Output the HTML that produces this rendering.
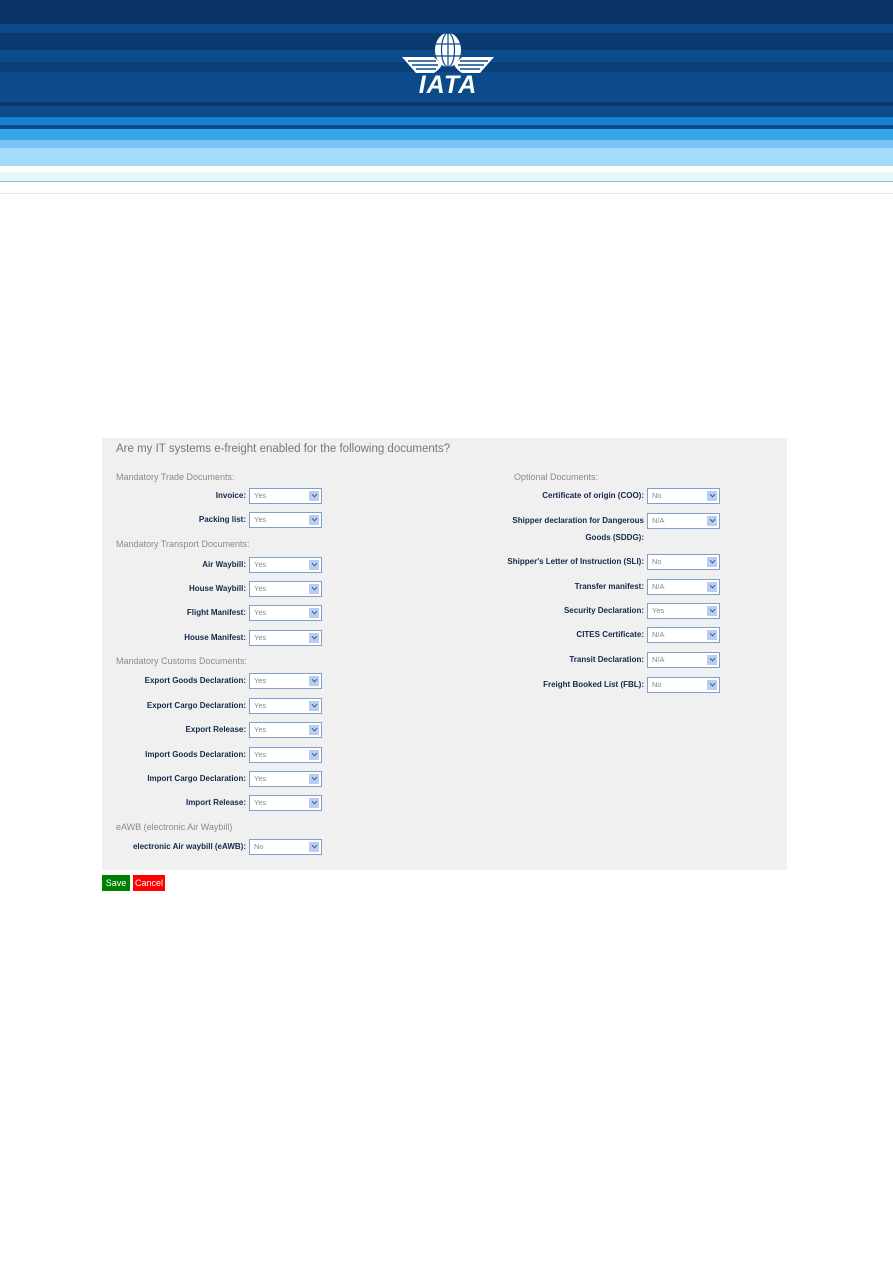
<!DOCTYPE html>
<html><head><meta charset="utf-8"><style>
body{margin:0;width:893px;height:1263px;background:#fff;position:relative;font-family:"Liberation Sans",Arial,sans-serif;overflow:hidden}
.s{position:absolute;left:0;width:893px}
.p{position:absolute;left:102px;top:438px;width:685px;height:432px;background:#f0f0f0}
.t{position:absolute;color:#8a8a8a;font-size:9px;white-space:nowrap}
.l{position:absolute;font-size:8px;font-weight:bold;color:#14284a;text-align:right;white-space:nowrap}
.sel{position:absolute;width:71px;height:14px;background:#fff;border:1px solid #7fa0c8;font-size:7.5px;color:#888;line-height:14px;text-indent:4px}
.sel::after{content:"";position:absolute;right:2px;top:2px;width:10px;height:10px;background:#b8cdf0}
.sel i{position:absolute;right:4px;width:4px;height:4px;border-right:1.5px solid #2a4a80;border-bottom:1.5px solid #2a4a80;transform:rotate(45deg) scale(.8);z-index:1;top:3px}
.b{position:absolute;top:875px;height:16px;color:#fff;font-size:9px;line-height:16px;text-align:center}
</style></head><body>
<div class="s" style="top:0;height:24px;background:#0a3264"></div>
<div class="s" style="top:24px;height:9px;background:#0d4a8a"></div>
<div class="s" style="top:33px;height:17px;background:#0a3a70"></div>
<div class="s" style="top:50px;height:12px;background:#0d4a8a"></div>
<div class="s" style="top:62px;height:10px;background:#0b3f78"></div>
<div class="s" style="top:72px;height:30px;background:#0d4a8a"></div>
<div class="s" style="top:102px;height:4px;background:#0a3a70"></div>
<div class="s" style="top:106px;height:11px;background:#0d4a8a"></div>
<div class="s" style="top:117px;height:8px;background:#1a80d0"></div>
<div class="s" style="top:125px;height:4px;background:#0d4a8a"></div>
<div class="s" style="top:129px;height:11px;background:#38a6ea"></div>
<div class="s" style="top:140px;height:8px;background:#78c4f4"></div>
<div class="s" style="top:148px;height:18px;background:#a2dcfa"></div>
<div class="s" style="top:166px;height:6px;background:#fff"></div>
<div class="s" style="top:172px;height:10px;background:#e2f8fa"></div>
<div class="s" style="top:181px;height:1px;background:#8ac8d0"></div>
<div class="s" style="top:193px;height:1px;background:#d8f0f6"></div>
<svg style="position:absolute;left:400px;top:32px" width="96" height="64" viewBox="0 0 96 64">
<ellipse cx="48" cy="18" rx="13" ry="17" fill="#fff"/>
<g stroke="#0d4a8a" stroke-width="1.2" fill="none"><line x1="48" y1="1" x2="48" y2="35"/><ellipse cx="48" cy="18" rx="6.5" ry="17"/><line x1="35" y1="12" x2="61" y2="12"/><line x1="35" y1="24" x2="61" y2="24"/></g>
<path d="M34 25 L2 25 L9 33 L16 41 L34 41 Q39 38 42 33 Z" fill="#fff"/>
<path d="M62 25 L94 25 L87 33 L80 41 L62 41 Q57 38 54 33 Z" fill="#fff"/>
<g stroke="#0d4a8a" stroke-width="1.5"><line x1="8" y1="29" x2="36" y2="29"/><line x1="12" y1="33" x2="38" y2="33"/><line x1="16" y1="37" x2="36" y2="37"/><line x1="60" y1="29" x2="88" y2="29"/><line x1="58" y1="33" x2="84" y2="33"/><line x1="60" y1="37" x2="80" y2="37"/></g>
<text x="48" y="61" text-anchor="middle" fill="#fff" font-family="Liberation Sans Narrow, Liberation Sans" font-weight="bold" font-style="italic" font-size="25" letter-spacing="1">IATA</text>
</svg>
<div class="p"></div>
<div class="t" style="left:116px;top:443px;font-size:11.5px;color:#777">Are my IT systems e-freight enabled for the following documents?</div>
<div class="t" style="left:116px;top:472px">Mandatory Trade Documents:</div>
<div class="t" style="left:116px;top:539px">Mandatory Transport Documents:</div>
<div class="t" style="left:116px;top:656px">Mandatory Customs Documents:</div>
<div class="t" style="left:116px;top:822px">eAWB (electronic Air Waybill)</div>
<div class="t" style="left:514px;top:472px">Optional Documents:</div>

<div class="l" style="right:647px;top:491px">Invoice:</div><div class="sel" style="left:249px;top:488px">Yes<i></i></div>
<div class="l" style="right:647px;top:515px">Packing list:</div><div class="sel" style="left:249px;top:512px">Yes<i></i></div>
<div class="l" style="right:647px;top:560px">Air Waybill:</div><div class="sel" style="left:249px;top:557px">Yes<i></i></div>
<div class="l" style="right:647px;top:584px">House Waybill:</div><div class="sel" style="left:249px;top:581px">Yes<i></i></div>
<div class="l" style="right:647px;top:608px">Flight Manifest:</div><div class="sel" style="left:249px;top:605px">Yes<i></i></div>
<div class="l" style="right:647px;top:633px">House Manifest:</div><div class="sel" style="left:249px;top:630px">Yes<i></i></div>
<div class="l" style="right:647px;top:676px">Export Goods Declaration:</div><div class="sel" style="left:249px;top:673px">Yes<i></i></div>
<div class="l" style="right:647px;top:701px">Export Cargo Declaration:</div><div class="sel" style="left:249px;top:698px">Yes<i></i></div>
<div class="l" style="right:647px;top:725px">Export Release:</div><div class="sel" style="left:249px;top:722px">Yes<i></i></div>
<div class="l" style="right:647px;top:750px">Import Goods Declaration:</div><div class="sel" style="left:249px;top:747px">Yes<i></i></div>
<div class="l" style="right:647px;top:774px">Import Cargo Declaration:</div><div class="sel" style="left:249px;top:771px">Yes<i></i></div>
<div class="l" style="right:647px;top:798px">Import Release:</div><div class="sel" style="left:249px;top:795px">Yes<i></i></div>
<div class="l" style="right:647px;top:842px">electronic Air waybill (eAWB):</div><div class="sel" style="left:249px;top:839px">No<i></i></div>

<div class="l" style="right:249px;top:491px">Certificate of origin (COO):</div><div class="sel" style="left:647px;top:488px">No<i></i></div>
<div class="l" style="right:249px;top:516px">Shipper declaration for Dangerous</div>
<div class="l" style="right:249px;top:533px">Goods (SDDG):</div><div class="sel" style="left:647px;top:513px">N/A<i></i></div>
<div class="l" style="right:249px;top:557px">Shipper's Letter of Instruction (SLI):</div><div class="sel" style="left:647px;top:554px">No<i></i></div>
<div class="l" style="right:249px;top:582px">Transfer manifest:</div><div class="sel" style="left:647px;top:579px">N/A<i></i></div>
<div class="l" style="right:249px;top:606px">Security Declaration:</div><div class="sel" style="left:647px;top:603px">Yes<i></i></div>
<div class="l" style="right:249px;top:630px">CITES Certificate:</div><div class="sel" style="left:647px;top:627px">N/A<i></i></div>
<div class="l" style="right:249px;top:655px">Transit Declaration:</div><div class="sel" style="left:647px;top:652px">N/A<i></i></div>
<div class="l" style="right:249px;top:680px">Freight Booked List (FBL):</div><div class="sel" style="left:647px;top:677px">No<i></i></div>

<div class="b" style="left:102px;width:28px;background:#008000">Save</div>
<div class="b" style="left:133px;width:32px;background:#ff0000">Cancel</div>
</body></html>
